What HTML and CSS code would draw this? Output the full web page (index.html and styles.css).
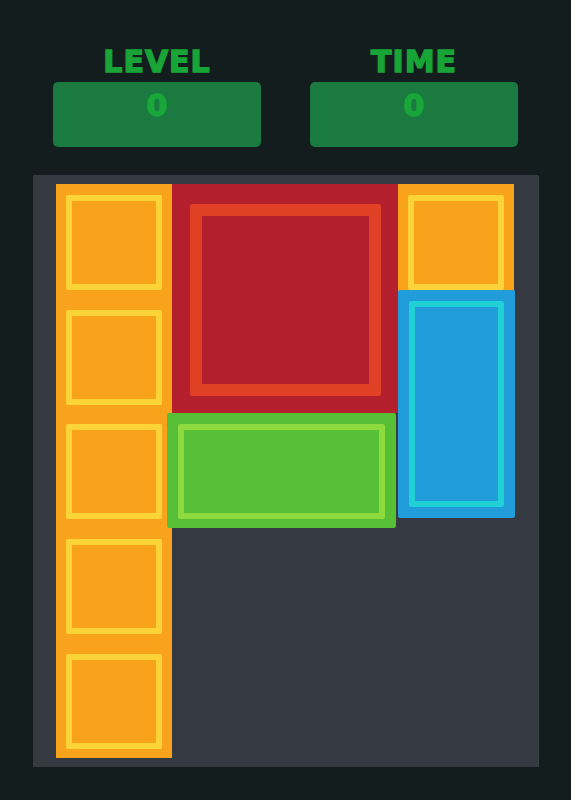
FILE: index.html
```html
<!DOCTYPE html>
<html lang="en">
<head>
    <meta charset="utf-8">
    <title>Block Slide</title>
    <link rel="stylesheet" href="styles.css">
</head>
<body>
<div class="hud">
    <div class="stat">
        <div class="label">LEVEL</div>
        <div class="value">0</div>
    </div>
    <div class="stat">
        <div class="label">TIME</div>
        <div class="value">0</div>
    </div>
</div>
<div class="board">
    <!-- left column of small blocks -->
    <div class="piece small" style="left:23px; top:9px"></div>
    <div class="piece small" style="left:23px; top:124px"></div>
    <div class="piece small" style="left:23px; top:238px"></div>
    <div class="piece small" style="left:23px; top:353px"></div>
    <div class="piece small" style="left:23px; top:468px"></div>
    <div class="piece small" style="left:365px; top:9px"></div>
    <div class="piece big" style="left:139px; top:9px"></div>
    <div class="piece tall" style="left:365px; top:115px"></div>
    <div class="piece wide" style="left:134px; top:238px"></div>
</div>
</body>
</html>
```

FILE: styles.css
```css
body {
    margin: 0;
    background: #131d1e;
    font-family: "DejaVu Sans", sans-serif;
}

/* Header */
.hud {
    display: flex;
    justify-content: center;
    gap: 49px;
    padding-top: 47px;
}
.stat {
    width: 208px;
    text-align: center;
}
.label, .value {
    font-size: 30px;
    line-height: 30px;
    font-weight: bold;
    color: #18a437;
    -webkit-text-stroke: 1.4px currentColor; /* chunkier letters */
}
.label {
    letter-spacing: 1px;
    margin-bottom: 5px;
}
.value {
    box-sizing: border-box;
    height: 65px;
    padding-top: 9px;
    background: #1b7a3f;
    border-radius: 5px;
    color: #19a73a;
}

/* Board */
.board {
    position: relative;
    width: 505px;
    height: 592px;
    margin: 28px auto 0;
    background: #353a42;
    box-shadow: 1px 1px 0 #3d4347;
}
.piece {
    position: absolute;
    box-sizing: border-box;
    border-radius: 2px;
}
.piece::before {
    content: "";
    position: absolute;
    border-style: solid;
    border-radius: 2px;
}
.small {
    width: 116px;
    height: 115px;
    background: #f9a21c;
    border-radius: 0;
}
.small::before {
    inset: 11px 10px 9px 10px;
    border-width: 6px;
    border-color: #fdd438;
}
.big {
    width: 226px;
    height: 229px;
    background: #b31f2c;
    border-radius: 0;
}
.big::before {
    inset: 20px 17px 17px 18px;
    border-width: 12px;
    border-color: #e04024;
}
.tall {
    width: 117px;
    height: 228px;
    background: #219ddb;
}
.tall::before {
    inset: 11px 11px 11px 11px;
    border-width: 6px;
    border-color: #1fd0d4;
}
.wide {
    width: 229px;
    height: 115px;
    background: #56bf35;
}
.wide::before {
    inset: 11px 11px 9px 11px;
    border-width: 6px;
    border-color: #8ddb3e;
}
```
